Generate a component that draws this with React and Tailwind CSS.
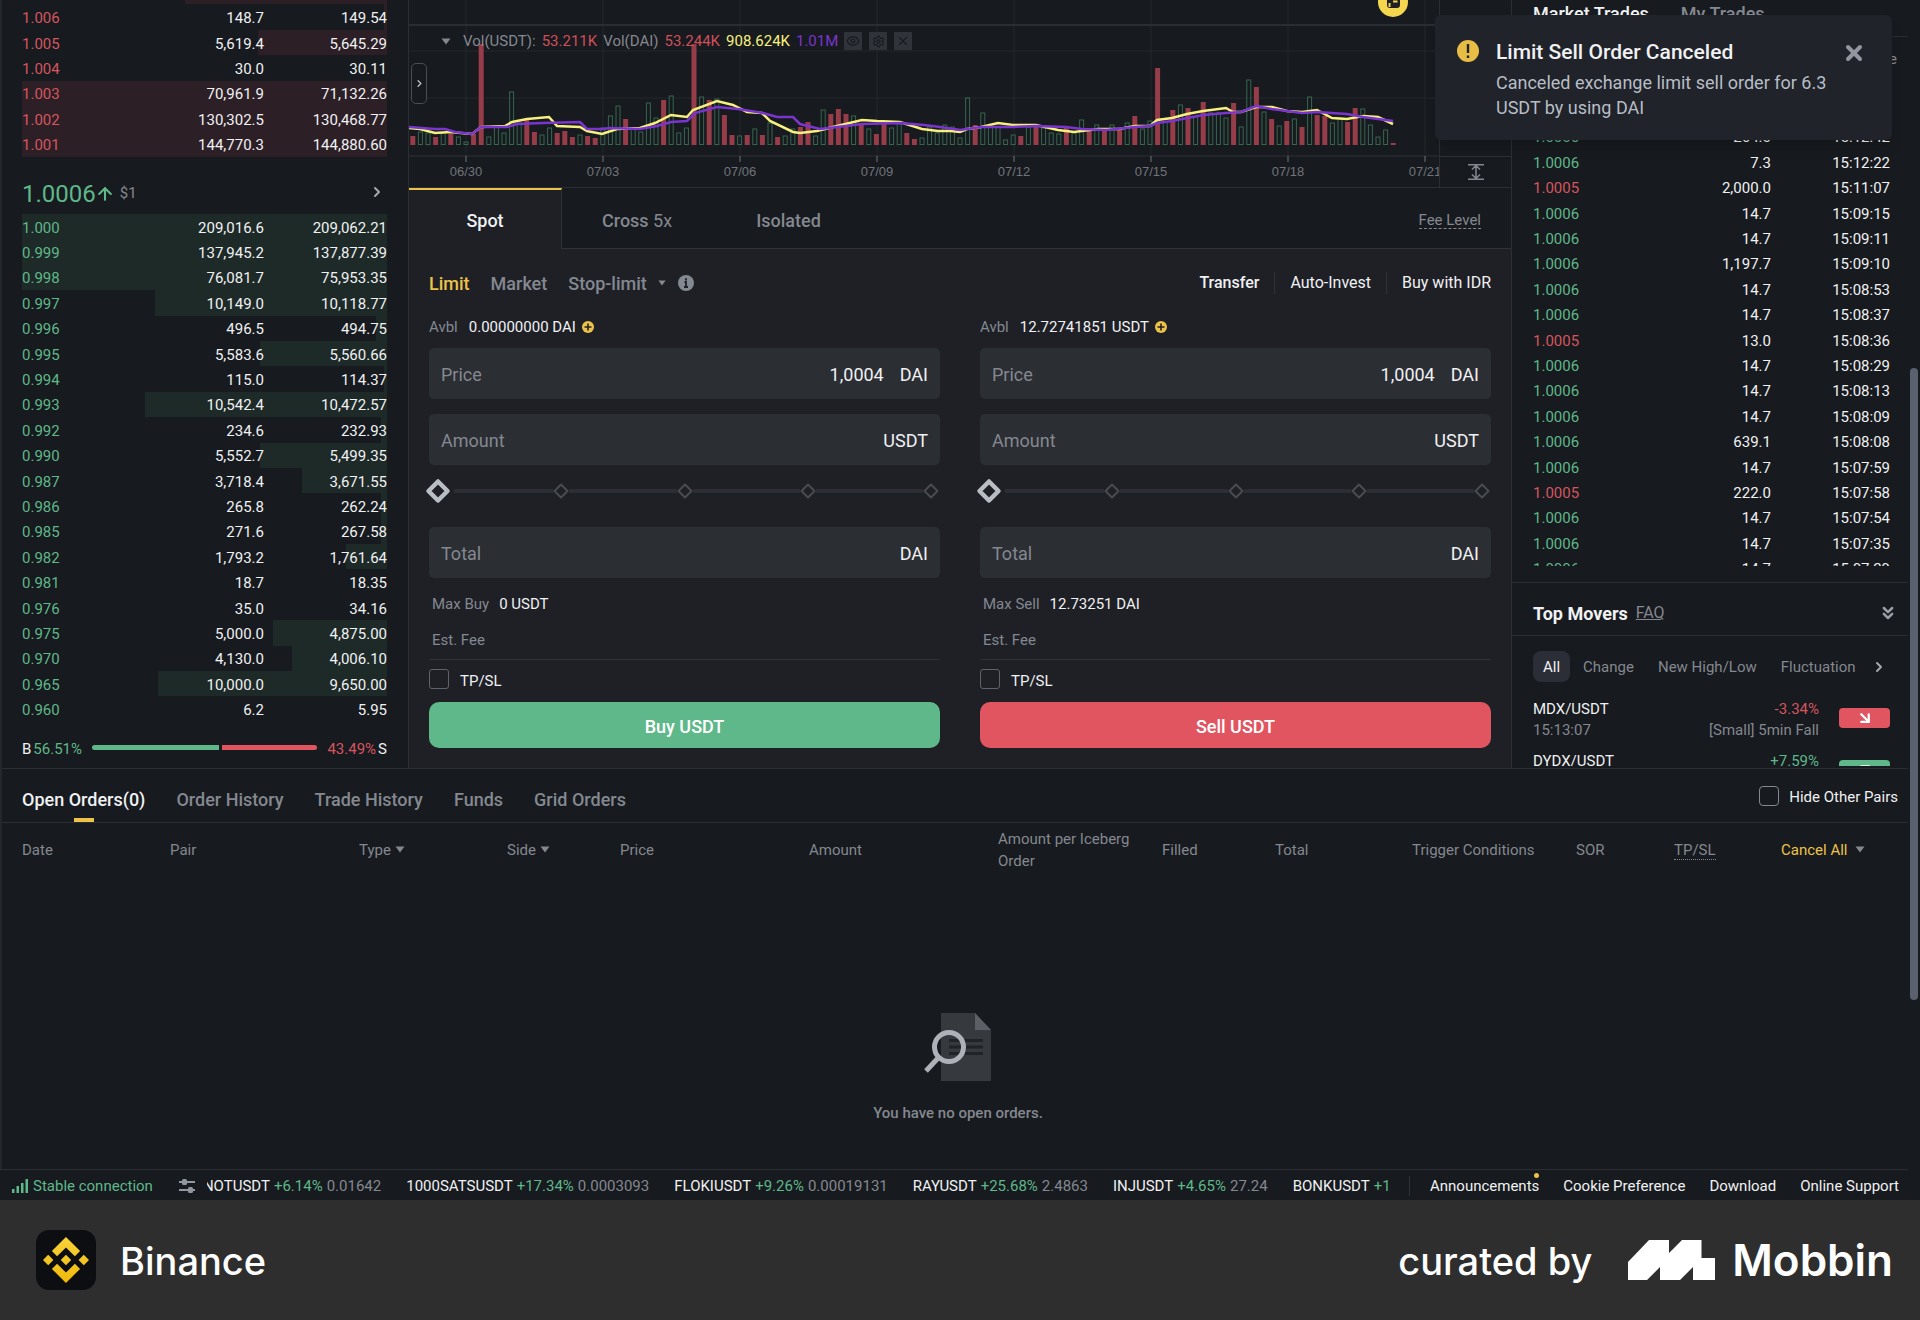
import React, { useState } from 'react'
import { ArrowDownRight, ArrowUp, ArrowUpRight, ChevronRight, ChevronsDown, Eye, Settings, X } from 'lucide-react'

const ASK_TINT = '#2d1f26'
const BID_TINT = '#1e2a28'

// price, amount, total, depth (% of the row)
const asks = [
  ['1.007', '8,562.1', '8,621.93', 55.3],
  ['1.006', '148.7', '149.54', 0.8],
  ['1.005', '5,619.4', '5,645.29', 35.3],
  ['1.004', '30.0', '30.11', 0],
  ['1.003', '70,961.9', '71,132.26', 100],
  ['1.002', '130,302.5', '130,468.77', 100],
  ['1.001', '144,770.3', '144,880.60', 100]
]

const bids = [
  ['1.000', '209,016.6', '209,062.21', 100],
  ['0.999', '137,945.2', '137,877.39', 100],
  ['0.998', '76,081.7', '75,953.35', 100],
  ['0.997', '10,149.0', '10,118.77', 63.6],
  ['0.996', '496.5', '494.75', 3],
  ['0.995', '5,583.6', '5,560.66', 34.8],
  ['0.994', '115.0', '114.37', 0.8],
  ['0.993', '10,542.4', '10,472.57', 66.3],
  ['0.992', '234.6', '232.93', 1.6],
  ['0.990', '5,552.7', '5,499.35', 34.8],
  ['0.987', '3,718.4', '3,671.55', 23.3],
  ['0.986', '265.8', '262.24', 1.6],
  ['0.985', '271.6', '267.58', 1.6],
  ['0.982', '1,793.2', '1,761.64', 11.2],
  ['0.981', '18.7', '18.35', 0],
  ['0.976', '35.0', '34.16', 0],
  ['0.975', '5,000.0', '4,875.00', 31.2],
  ['0.970', '4,130.0', '4,006.10', 26],
  ['0.965', '10,000.0', '9,650.00', 62.7],
  ['0.960', '6.2', '5.95', 0]
]

const trades = [
  ['1.0006', '14.7', '15:12:58'],
  ['1.0006', '14.7', '15:12:51'],
  ['1.0006', '264.0', '15:12:42'],
  ['1.0006', '7.3', '15:12:22'],
  ['1.0005', '2,000.0', '15:11:07'],
  ['1.0006', '14.7', '15:09:15'],
  ['1.0006', '14.7', '15:09:11'],
  ['1.0006', '1,197.7', '15:09:10'],
  ['1.0006', '14.7', '15:08:53'],
  ['1.0006', '14.7', '15:08:37'],
  ['1.0005', '13.0', '15:08:36'],
  ['1.0006', '14.7', '15:08:29'],
  ['1.0006', '14.7', '15:08:13'],
  ['1.0006', '14.7', '15:08:09'],
  ['1.0006', '639.1', '15:08:08'],
  ['1.0006', '14.7', '15:07:59'],
  ['1.0005', '222.0', '15:07:58'],
  ['1.0006', '14.7', '15:07:54'],
  ['1.0006', '14.7', '15:07:35'],
  ['1.0006', '14.7', '15:07:29']
]

// volume bars: r = filled red, g = green outline, then the height
const volume = `r9 g13 g12 r8 g12 r11 g8 g3 r11 r101 g8 g18 g12 g53 g22 r26 r13 g10 g17 r12 r14 r8 g10 r9 r7
g17 g29 g39 r26 g17 g13 g42 g27 r45 g49 g12 g17 r101 g48 r45 g46 r30 r10 g9 r10 g16 r10 g22 r8 g9 g16 r18 r23
g9 g35 r31 r36 r31 g29 r22 g16 r11 r22 g17 g21 r12 r6 g7 g18 g12 g20 g18 g7 g47 r20 g32 g18 g18 g5 g10 r9 g18
r19 g17 g12 g11 r17 g12 g25 r17 g20 r15 g20 r16 g22 r29 g16 g24 r77 g23 r35 g40 r37 g28 r43 g32 g32 g27 r42
g18 g65 r58 g33 r26 g19 r24 g26 r18 g48 r30 r29 g22 g27 r23 r37 g36 g20 g8 g15 r2`
  .split(/\s+/)
  .map((v) => ({ up: v[0] === 'g', h: Number(v.slice(1)) }))

const maFast =
  '0,128 11,129 26,133 41,132 63,134 72,127 96,126 103,122 118,119 140,117 148,126 171,127 178,131 193,134 208,129 231,128 246,123 262,115 278,117 284,110 308,101 324,105 338,112 353,113 361,121 384,132 391,133 408,131 428,126 453,120 468,121 491,122 513,129 529,131 542,131 551,132 558,129 572,127 589,123 604,125 627,125 649,130 665,132 689,129 710,129 726,126 741,126 748,120 763,118 778,114 794,111 817,108 824,112 832,112 847,107 863,107 878,111 893,112 908,110 923,118 938,119 954,116 969,117 984,124'
const maSlow =
  '0,127 26,129 36,129 46,132 63,134 72,127 98,127 108,124 134,123 171,122 178,129 194,129 201,128 231,129 248,126 262,122 278,121 286,113 308,107 329,109 354,113 368,117 384,117 391,124 411,129 428,127 453,124 491,123 515,125 531,127 551,130 572,127 590,127 604,127 627,126 657,127 673,129 697,130 726,127 741,126 748,123 763,121 794,115 817,113 832,112 847,106 863,109 893,113 908,112 938,114 954,117 984,121'

const dates = ['06/30', '07/03', '07/06', '07/09', '07/12', '07/15', '07/18', '07/21']

const tickers = [
  ['NOTUSDT', '+6.14%', '0.01642'],
  ['1000SATSUSDT', '+17.34%', '0.0003093'],
  ['FLOKIUSDT', '+9.26%', '0.00019131'],
  ['RAYUSDT', '+25.68%', '2.4863'],
  ['INJUSDT', '+4.65%', '27.24'],
  ['BONKUSDT', '+12.08%', '0.00002987']
]

function Caret({ className = 'h-[7px] w-[10px]' }) {
  return (
    <svg viewBox="0 0 10 7" aria-hidden="true" className={`fill-[#848890] ${className}`}>
      <path d="M0.5 0.5h9L5 6.5z" />
    </svg>
  )
}

function BookTable({ rows, side, className }) {
  const tint = side === 'ask' ? ASK_TINT : BID_TINT
  return (
    <table className={`w-full table-fixed text-[15px] leading-5 [&_td]:p-0 [&_td]:pt-[2px] ${className}`}>
      <tbody>
        {rows.map(([price, amount, total, depth]) => (
          <tr
            key={price}
            style={{ background: depth ? `linear-gradient(to left, ${tint} ${depth}%, transparent ${depth}%)` : undefined }}
          >
            <td className={`w-[100px] ${side === 'ask' ? 'text-[#d5565f]' : 'text-[#5fb88a]'}`}>{price}</td>
            <td className="w-[142px] text-right">{amount}</td>
            <td className="text-right">{total}</td>
          </tr>
        ))}
      </tbody>
    </table>
  )
}

function OrderBook() {
  return (
    <section className="w-[407px] shrink-0 border-r border-[#2b2f33] pr-[21px] pl-5">
      {/* Asks */}
      <div className="flex h-[157px] flex-col justify-end overflow-hidden">
        <BookTable rows={asks} side="ask" className="h-[178px] shrink-0" />
      </div>

      {/* Last price */}
      <div className="flex h-[57px] items-center pt-4 pr-[2px]">
        <span className="text-[24px] leading-7 text-[#5fb88a]">1.0006</span>
        <ArrowUp className="-ml-px h-5 w-5 text-[#5fb88a]" strokeWidth={2.5} />
        <span className="ml-[5px] text-[15px] text-[#848890]">$1</span>
        <button type="button" aria-label="More depth" className="ml-auto pb-1">
          <ChevronRight className="h-4 w-4 text-[#a5a9b0]" strokeWidth={3} />
        </button>
      </div>

      {/* Bids */}
      <BookTable rows={bids} side="bid" className="h-[508px]" />

      {/* Buy / sell ratio */}
      <div className="flex h-[46px] items-center pt-2 text-[15px] leading-5">
        <span>B</span>
        <span className="ml-[2px] text-[#5fb88a]">56.51%</span>
        <div className="mx-[10px] mb-1 flex h-[5px] flex-1 gap-[3px]">
          <div className="rounded-l-full bg-[#5fb88a]" style={{ width: '56.51%' }} />
          <div className="flex-1 rounded-r-full bg-[#e15561]" />
        </div>
        <span className="mr-[2px] text-[#d5565f]">43.49%</span>
        <span>S</span>
      </div>
    </section>
  )
}

function VolumeChart() {
  return (
    <div className="relative flex h-[188px] border-b border-[#2b2f33]">
      <svg className="h-[187px] min-w-0 flex-1" role="img" aria-label="Volume chart">
        <g stroke="#24282c">
          {dates.map((d, i) => (
            <line key={d} x1={57 + i * 137} x2={57 + i * 137} y1="0" y2="156" />
          ))}
          <line x1="0" x2="100%" y1="51" y2="51" />
          <line x1="0" x2="100%" y1="98" y2="98" />
        </g>
        <line x1="0" x2="100%" y1="25" y2="25" stroke="#2a2e32" strokeWidth="2" />
        <line x1="0" x2="100%" y1="156" y2="156" stroke="#2f3337" />
        {volume.map((bar, i) =>
          bar.up ? (
            <rect key={i} x={1.8 + i * 7.6} y={145 - bar.h} width="4" height={bar.h - 0.5} fill="none" stroke="#37664f" />
          ) : (
            <rect key={i} x={1.3 + i * 7.6} y={145 - bar.h} width="5" height={bar.h} fill="#963d49" />
          )
        )}
        <polyline points={maFast} fill="none" stroke="#f6f07f" strokeWidth="2.500" />
        <polyline points={maSlow} fill="none" stroke="#7a35cf" strokeWidth="2.500" />
        {dates.map((d, i) => (
          <g key={d}>
            <line x1={57 + i * 137} x2={57 + i * 137} y1="156" y2="162" stroke="#70757b" />
            <text x={57 + i * 137} y="176" textAnchor="middle" fill="#70757b" className="font-['Liberation_Sans',sans-serif] text-[13px]">
              {d}
            </text>
          </g>
        ))}
        <circle cx="984" cy="2" r="15" fill="#f5d64f" />
        <rect x="978" y="-6" width="13" height="14" rx="3" fill="#1e2026" />
        <path d="M980.500 3v4M984 1.500h4.500" stroke="#f5d64f" strokeWidth="2" />
      </svg>

      {/* Price axis */}
      <div className="flex w-[72px] flex-col justify-end border-l border-[#2b2f33]">
        <button type="button" aria-label="Auto scale" className="flex h-[31px] items-center justify-center border-t border-[#2f3337]">
          <svg viewBox="0 0 16 16" className="h-4 w-4 fill-none stroke-[#848890]" strokeWidth="1.5">
            <path d="M0 0.800h16M0 15.200h16M8 2v12M4 5.500l4-4 4 4M4 10.500l4 4 4-4" />
          </svg>
        </button>
      </div>

      <button
        type="button"
        aria-label="Show drawing tools"
        className="absolute top-[63px] left-[2px] flex h-[41px] w-4 items-center justify-center rounded-[5px] border border-[#4a4e54] bg-[#171a1e]"
      >
        <ChevronRight className="h-[11px] w-[11px] text-[#b7bdc6]" strokeWidth={3} />
      </button>

      <div className="absolute top-8 left-8 flex items-center gap-[6px] text-[15px] leading-[18px] text-[#848890]">
        <Caret className="mr-[6px] h-[7px] w-[10px]" />
        <span>Vol(USDT):</span>
        <span className="text-[#cf4f5a]">53.211K</span>
        <span>Vol(DAI)</span>
        <span className="text-[#cf4f5a]">53.244K</span>
        <span className="text-[#f6f07f]">908.624K</span>
        <span className="text-[#7a35cf]">1.01M</span>
        <span className="flex gap-[7px] text-[#171a1e]">
          <button type="button" aria-label="Hide" className="flex h-[18px] w-[18px] items-center justify-center bg-[#30343a]">
            <Eye className="h-[14px] w-[14px]" />
          </button>
          <button type="button" aria-label="Settings" className="flex h-[18px] w-[18px] items-center justify-center bg-[#30343a]">
            <Settings className="h-[13px] w-[13px]" />
          </button>
          <button type="button" aria-label="Remove" className="flex h-[18px] w-[18px] items-center justify-center bg-[#30343a]">
            <X className="h-[14px] w-[14px]" />
          </button>
        </span>
      </div>
    </div>
  )
}

function Field({ id, label, unit, defaultValue, className = '' }) {
  return (
    <div className={`flex h-[51px] items-center rounded-[5px] bg-[#2b2e33] px-3 pt-[2px] text-[18px] ${className}`}>
      <label htmlFor={id} className="text-[#848890]">{label}</label>
      <input
        id={id}
        defaultValue={defaultValue}
        className="mr-4 min-w-0 flex-1 bg-transparent text-right outline-none"
      />
      <span>{unit}</span>
    </div>
  )
}

function Diamond({ active }) {
  return (
    <svg viewBox="0 0 16 16" aria-hidden="true" className="h-4 w-4 shrink-0 overflow-visible">
      {active ? (
        <path d="M8-1.500L17.500 8L8 17.500L-1.500 8z" fill="#1e2026" stroke="#b9bdc4" strokeWidth="4.500" strokeLinejoin="round" />
      ) : (
        <path d="M8 1.500L14.500 8L8 14.500L1.500 8z" fill="#1e2026" stroke="#484c52" strokeWidth="2" strokeLinejoin="round" />
      )}
    </svg>
  )
}

function OrderForm({ side, available, availableUnit, maxLabel, max }) {
  const [percent, setPercent] = useState(0)
  const id = side.toLowerCase()
  return (
    <form className="min-w-0 flex-1" onSubmit={(e) => e.preventDefault()}>
      <div className="flex h-5 items-center text-[15px] leading-5">
        <span className="text-[#848890]">Avbl</span>
        <span className="ml-[11px]">{available} {availableUnit}</span>
        <button type="button" aria-label="Deposit" className="ml-[6px]">
          <svg viewBox="0 0 12 12" className="h-3 w-3">
            <circle cx="6" cy="6" r="6" fill="#edc24a" />
            <path d="M6 2.500v7M2.500 6h7" stroke="#1e2026" strokeWidth="1.600" />
          </svg>
        </button>
      </div>

      <Field id={`${id}-price`} label="Price" unit="DAI" defaultValue="1,0004" className="mt-[11px]" />
      <Field id={`${id}-amount`} label="Amount" unit="USDT" className="mt-[15px]" />

      {/* Percentage slider */}
      <div className="relative flex h-[52px] items-center px-px">
        <Diamond active />
        {[25, 50, 75, 100].map((step) => (
          <React.Fragment key={step}>
            <div className="flex-1">
              <div className={`h-1 bg-[#2b2f35] ${step === 25 ? 'ml-2' : ''}`} />
            </div>
            <Diamond />
          </React.Fragment>
        ))}
        <input
          type="range"
          min="0"
          max="100"
          value={percent}
          onChange={(e) => setPercent(Number(e.target.value))}
          aria-label={`${side} amount percentage`}
          className="absolute inset-0 h-full w-full opacity-0"
        />
      </div>

      <Field id={`${id}-total`} label="Total" unit="DAI" className="mt-[10px]" />

      <div className="mt-4 flex gap-[10px] pl-[3px] text-[15px] leading-5">
        <span className="text-[#848890]">{maxLabel}</span>
        <span>{max}</span>
      </div>
      <p className="mt-4 pl-[3px] text-[15px] leading-5 text-[#848890]">Est. Fee</p>

      <div className="mt-[9px] flex items-center border-t border-[#2f3338] pt-[9px]">
        <input
          id={`${id}-tpsl`}
          type="checkbox"
          className="h-5 w-5 appearance-none rounded-[3px] border border-[#5e636b] checked:bg-[#edc24a]"
        />
        <label htmlFor={`${id}-tpsl`} className="pt-1 pl-[11px] text-[15px] leading-4">TP/SL</label>
      </div>

      <button
        type="submit"
        className={`mt-[13px] h-[46px] w-full rounded-[10px] pt-[2px] text-[18px] font-medium text-white ${
          side === 'Buy' ? 'bg-[#5fb88a]' : 'bg-[#e15561]'
        }`}
      >
        {side} USDT
      </button>
    </form>
  )
}

function TradePanel() {
  return (
    <div className="bg-[#1e2026]">
      {/* Account tabs */}
      <div className="flex h-[61px] text-[18px] font-medium text-[#848890]">
        <button type="button" className="w-[153px] border-t-2 border-r border-t-[#edc24a] border-r-[#2f3338] pt-px text-[#f0f1f3]">
          Spot
        </button>
        <div className="flex flex-1 items-center border-b border-[#2f3338] bg-[#171a1e] pt-1 pr-[30px]">
          <button type="button" className="ml-10">
            Cross <span className="font-normal">5x</span>
          </button>
          <button type="button" className="ml-[84px]">Isolated</button>
          <a href="#fee" className="ml-auto border-b border-dashed border-[#848890] text-[15px] leading-4 font-normal">
            Fee Level
          </a>
        </div>
      </div>

      <div className="px-5 pb-5">
        {/* Order types */}
        <div className="flex h-[68px] items-center">
          <div className="flex items-center gap-[21px] text-[18px] font-medium text-[#848890]">
            <button type="button" className="text-[#edc24a]">Limit</button>
            <button type="button">Market</button>
            <button type="button" className="flex items-center gap-[11px]">
              Stop-limit
              <Caret className="h-[6px] w-[8px]" />
            </button>
          </div>
          <svg viewBox="0 0 16 16" className="ml-3 h-4 w-4" role="img" aria-label="About stop-limit">
            <circle cx="8" cy="8" r="8" fill="#848890" />
            <path d="M8 3.200v2.200M6.500 7H8v5M6 12h4" stroke="#1e2026" strokeWidth="1.800" fill="none" />
          </svg>
          <div className="ml-auto flex items-center text-[16px] leading-[22px]">
            <button type="button" className="pr-[15px] font-medium">Transfer</button>
            <a href="#auto-invest" className="border-l border-[#2f3338] px-[15px]">Auto-Invest</a>
            <a href="#buy" className="border-l border-[#2f3338] pl-[15px]">Buy with IDR</a>
          </div>
        </div>

        <div className="flex gap-10">
          <OrderForm side="Buy" available="0.00000000" availableUnit="DAI" maxLabel="Max Buy" max="0 USDT" />
          <OrderForm side="Sell" available="12.72741851" availableUnit="USDT" maxLabel="Max Sell" max="12.73251 DAI" />
        </div>
      </div>
    </div>
  )
}

function Mover({ pair, time, change, note, up }) {
  return (
    <div className="flex h-[52px] items-center text-[15px] leading-[21px]">
      <div>
        <p>{pair}</p>
        <p className="text-[#848890]">{time}</p>
      </div>
      <div className="ml-auto text-right">
        <p className={up ? 'text-[#5fb88a]' : 'text-[#d5565f]'}>{change}</p>
        <p className="text-[#848890]">{note}</p>
      </div>
      <div className={`mb-1 ml-5 flex h-5 w-[51px] items-center justify-center rounded-[4px] ${up ? 'bg-[#5fb88a]' : 'bg-[#e15561]'}`}>
        {up ? (
          <ArrowUpRight className="h-[18px] w-[18px] text-white" strokeWidth={3} />
        ) : (
          <ArrowDownRight className="h-[18px] w-[18px] text-white" strokeWidth={3} />
        )}
      </div>
    </div>
  )
}

function MarketColumn() {
  return (
    <section className="w-[397px] shrink-0 border-l border-[#2b2f33]">
      <div className="flex h-[37px] items-start gap-8 border-b border-[#2b2f33] pt-[2px] pl-[21px] text-[18px] leading-6 font-medium">
        <button type="button">Market Trades</button>
        <button type="button" className="text-[#848890]">My Trades</button>
      </div>

      <div className="h-[529px] overflow-hidden pr-[18px] pl-[21px] text-[15px] leading-5">
        <table className="h-[544px] w-full table-fixed [&_td]:p-0 [&_td]:pt-[2px]">
          <thead>
            <tr className="h-9 text-left text-[#848890]">
              <th className="w-[110px] p-0 pt-2 font-normal">Price(DAI)</th>
              <th className="w-[128px] p-0 pt-2 text-right font-normal">Amount(USDT)</th>
              <th className="p-0 pt-2 text-right font-normal">
                <span className="-mr-[7px]">Time</span>
              </th>
            </tr>
          </thead>
          <tbody>
            {trades.map(([price, amount, time]) => (
              <tr key={time}>
                <td className={price === '1.0005' ? 'text-[#d5565f]' : 'text-[#5fb88a]'}>{price}</td>
                <td className="text-right">{amount}</td>
                <td className="text-right">{time}</td>
              </tr>
            ))}
          </tbody>
        </table>
      </div>

      {/* Top movers */}
      <div className="mt-4 flex h-[54px] items-center border-y border-[#2b2f33] pt-2 pr-[10px] pl-[21px]">
        <h2 className="text-[18px] font-bold">Top Movers</h2>
        <a href="#faq" className="ml-2 text-[16px] text-[#848890] underline">FAQ</a>
        <button type="button" aria-label="Collapse" className="ml-auto">
          <ChevronsDown className="h-5 w-5 text-[#9a9ea6]" strokeWidth={3} />
        </button>
      </div>
      <div className="h-[130px] overflow-hidden pt-[15px] pr-[18px] pl-[21px]">
        <div className="flex h-[31px] items-center text-[15px] text-[#848890]">
          <button type="button" className="h-[31px] rounded-[8px] bg-[#2b2e36] px-[10px] pt-[2px] text-[#f0f1f3]">All</button>
          <button type="button" className="ml-[13px] pt-[2px]">Change</button>
          <button type="button" className="ml-6 pt-[2px]">New High/Low</button>
          <button type="button" className="ml-6 pt-[2px]">Fluctuation</button>
          <button type="button" aria-label="More filters" className="ml-auto">
            <ChevronRight className="mr-[3px] h-4 w-4 text-[#a5a9b0]" strokeWidth={3} />
          </button>
        </div>
        <div className="mt-3">
          <Mover pair="MDX/USDT" time="15:13:07" change="-3.34%" note="[Small] 5min Fall" />
          <Mover pair="DYDX/USDT" time="15:13:05" change="+7.59%" note="[Small] 5min Rise" up />
        </div>
      </div>
    </section>
  )
}

function Toast() {
  return (
    <div role="alert" className="absolute top-[15px] right-4 flex w-[457px] rounded-[6px] bg-[#202329] pt-[23px] pr-[26px] pb-5 pl-[22px] shadow-lg">
      <svg viewBox="0 0 22 22" className="mt-[2px] h-[22px] w-[22px] shrink-0" aria-hidden="true">
        <circle cx="11" cy="11" r="11" fill="#e8bd45" />
        <path d="M11 4v9M11 15.500v2.500" stroke="#202329" strokeWidth="2.400" />
      </svg>
      <div className="ml-[17px] flex-1">
        <h2 className="text-[21px] leading-7 font-medium">Limit Sell Order Canceled</h2>
        <p className="mt-1 text-[18px] leading-[25px] text-[#b7bdc6]">
          Canceled exchange limit sell order for 6.3 USDT by using DAI
        </p>
      </div>
      <button type="button" aria-label="Dismiss" className="mt-[3px] h-6">
        <X className="h-6 w-6 text-[#9296a0]" strokeWidth={4} />
      </button>
    </div>
  )
}

function OrdersPanel() {
  return (
    <section className="border-t border-[#2b2f33]">
      <div className="flex h-[54px] border-b border-[#2b2f33] pr-[10px] pl-5 text-[18px] font-medium text-[#848890]">
        <div className="flex gap-[31px]">
          <button type="button" className="flex flex-col items-center justify-end text-[#f0f1f3]">
            Open Orders(0)
            <span className="mt-[5px] h-1 w-5 bg-[#edc24a]" />
          </button>
          <button type="button" className="pt-[7px]">Order History</button>
          <button type="button" className="pt-[7px]">Trade History</button>
          <button type="button" className="pt-[7px]">Funds</button>
          <button type="button" className="pt-[7px]">Grid Orders</button>
        </div>
        <div className="ml-auto flex items-center gap-[10px] text-[15px] font-normal text-[#f0f1f3]">
          <input
            id="hide-pairs"
            type="checkbox"
            className="h-5 w-5 appearance-none rounded-[4px] border border-[#848890] checked:bg-[#edc24a]"
          />
          <label htmlFor="hide-pairs" className="pt-[3px]">Hide Other Pairs</label>
        </div>
      </div>

      <div className="pl-5">
        <table className="w-full table-fixed text-left text-[15px] leading-[22px] text-[#848890]">
          <thead>
            <tr className="h-[53px] [&>th]:p-0 [&>th]:font-normal">
              <th className="w-[148px]">Date</th>
              <th className="w-[189px]">Pair</th>
              <th className="w-[148px]">
                <button type="button" className="flex items-center gap-1">Type <Caret /></button>
              </th>
              <th className="w-[113px]">
                <button type="button" className="flex items-center gap-1">Side <Caret /></button>
              </th>
              <th className="w-[189px]">Price</th>
              <th className="w-[189px]">Amount</th>
              <th className="w-[164px]">Amount per Iceberg Order</th>
              <th className="w-[113px]">Filled</th>
              <th className="w-[137px]">Total</th>
              <th className="w-[164px]">Trigger Conditions</th>
              <th className="w-[98px]">SOR</th>
              <th className="w-[107px]">
                <span className="border-b border-dotted border-[#848890]">TP/SL</span>
              </th>
              <th className="w-[127px]">
                <button type="button" className="flex items-center gap-2 text-[#edc24a]">Cancel All <Caret /></button>
              </th>
            </tr>
          </thead>
        </table>
      </div>

      <div className="flex flex-col items-center pt-[137px] pb-[44px] pl-[6px]">
        <svg viewBox="0 0 68 68" className="h-[68px] w-[68px]" aria-hidden="true">
          <path d="M17 0h34l16 17v51H17z" fill="#36393e" />
          <path d="M51 0l16 17H51z" fill="#5c6066" />
          <path d="M25 27.500h34M25 34h34M25 40.500h34" stroke="#202328" strokeWidth="3" />
          <circle cx="25" cy="34" r="14.500" fill="none" stroke="#aeb1b7" strokeWidth="5" />
          <path d="M15 44L2 58" stroke="#aeb1b7" strokeWidth="5" />
        </svg>
        <p className="mt-5 text-[15px] leading-6 font-medium text-[#848890]">You have no open orders.</p>
      </div>
    </section>
  )
}

function StatusBar() {
  return (
    <div className="flex h-[31px] items-center border-t border-[#2b2f33] pt-px pr-[9px] pl-3 text-[15px] leading-5">
      <svg viewBox="0 0 16 14" className="h-[14px] w-4 fill-[#5fb88a]" aria-hidden="true">
        <path d="M0 10h2.500v4H0zM4.500 7H7v7H4.500zM9 4h2.500v10H9zM13.500 0H16v14h-2.500z" />
      </svg>
      <span className="ml-[5px] text-[#5fb88a]">Stable connection</span>
      <button type="button" aria-label="Ticker settings" className="ml-[26px]">
        <svg viewBox="0 0 16 16" className="h-4 w-4 fill-[#9296a0]">
          <path d="M0 3h16v2H0zM0 11h16v2H0z" />
          <rect x="3" y="1" width="5" height="6" rx="1.500" />
          <rect x="9" y="9" width="5" height="6" rx="1.500" />
        </svg>
      </button>
      <div className="ml-3 min-w-0 flex-1 overflow-hidden">
        <div className="-ml-1 flex gap-[25px] whitespace-nowrap">
          {tickers.map(([pair, change, price]) => (
            <a key={pair} href="#ticker" className="flex shrink-0 gap-1">
              <span>{pair}</span>
              <span className="text-[#5fb88a]">{change}</span>
              <span className="text-[#848890]">{price}</span>
            </a>
          ))}
        </div>
      </div>
      <div className="ml-5 flex gap-6 border-l border-[#2f3338] pl-5 whitespace-nowrap">
        <a href="#announcements" className="relative">
          Announcements
          <span className="absolute -top-[3px] right-0 h-[5px] w-[5px] rounded-full bg-[#edc24a]" />
        </a>
        <a href="#cookies">Cookie Preference</a>
        <a href="#download">Download</a>
        <a href="#support">Online Support</a>
      </div>
    </div>
  )
}

function BrandBar() {
  return (
    <footer className="flex h-[120px] items-center bg-[#2e2e2e] pr-[27px] pl-9 font-['Inter',sans-serif] text-white">
      <div className="flex h-[60px] w-[60px] items-center justify-center rounded-[13px] bg-[#0c0e12]">
        <svg viewBox="0 0 24 24" className="h-[46px] w-[46px]" aria-hidden="true">
          <defs>
            <linearGradient id="gold" x1="0" y1="0" x2="0" y2="1">
              <stop offset="0" stopColor="#f8d33a" />
              <stop offset="1" stopColor="#f0b90b" />
            </linearGradient>
          </defs>
          <path
            fill="url(#gold)"
            d="M16.624 13.9202l2.7175 2.7154-7.353 7.353-7.353-7.352 2.7175-2.7164 4.6355 4.6595 4.6356-4.6595zm4.6366-4.6366L24 12l-2.7154 2.7164L18.5682 12l2.6924-2.7164zm-9.272.001l2.7163 2.6914-2.7164 2.7174v-.001L9.2721 12l2.7164-2.7154zm-9.2722-.001L5.4088 12l-2.6914 2.6924L0 12l2.7164-2.7164zM11.9885.0115l7.353 7.329-2.7174 2.7154-4.6356-4.6356-4.6355 4.6595-2.7174-2.7154 7.353-7.353z"
          />
        </svg>
      </div>
      <span className="ml-6 pt-[2px] text-[38px] font-medium">Binance</span>
      <span className="ml-auto pt-[2px] text-[38px] font-medium">curated by</span>
      <svg viewBox="0 0 87 40" className="ml-9 h-10 w-[87px] fill-white" aria-hidden="true">
        <path d="M0 22L21 0h20v13L54 0h19.500v18H87v22H65V27L52 40H32V27L19 40H0z" />
      </svg>
      <span className="ml-[17px] text-[44px] font-semibold">Mobbin</span>
    </footer>
  )
}

export default function App() {
  return (
    <div className="min-h-screen bg-[#171a1e] font-['Roboto',sans-serif] text-[#f0f1f3]">
      <div className="flex">
        <main className="relative min-w-0 flex-1">
          <div className="border-l-2 border-[#24282c]">
            <div className="flex">
              <OrderBook />
              <section className="min-w-0 flex-1">
                <VolumeChart />
                <TradePanel />
              </section>
              <MarketColumn />
            </div>
            <OrdersPanel />
          </div>
          <StatusBar />
          <Toast />
        </main>

        {/* Scrollbar */}
        <div className="w-3 px-[2px] pt-[368px]">
          <div className="h-[632px] rounded-full bg-[#5a606e]" />
        </div>
      </div>
      <BrandBar />
    </div>
  )
}
